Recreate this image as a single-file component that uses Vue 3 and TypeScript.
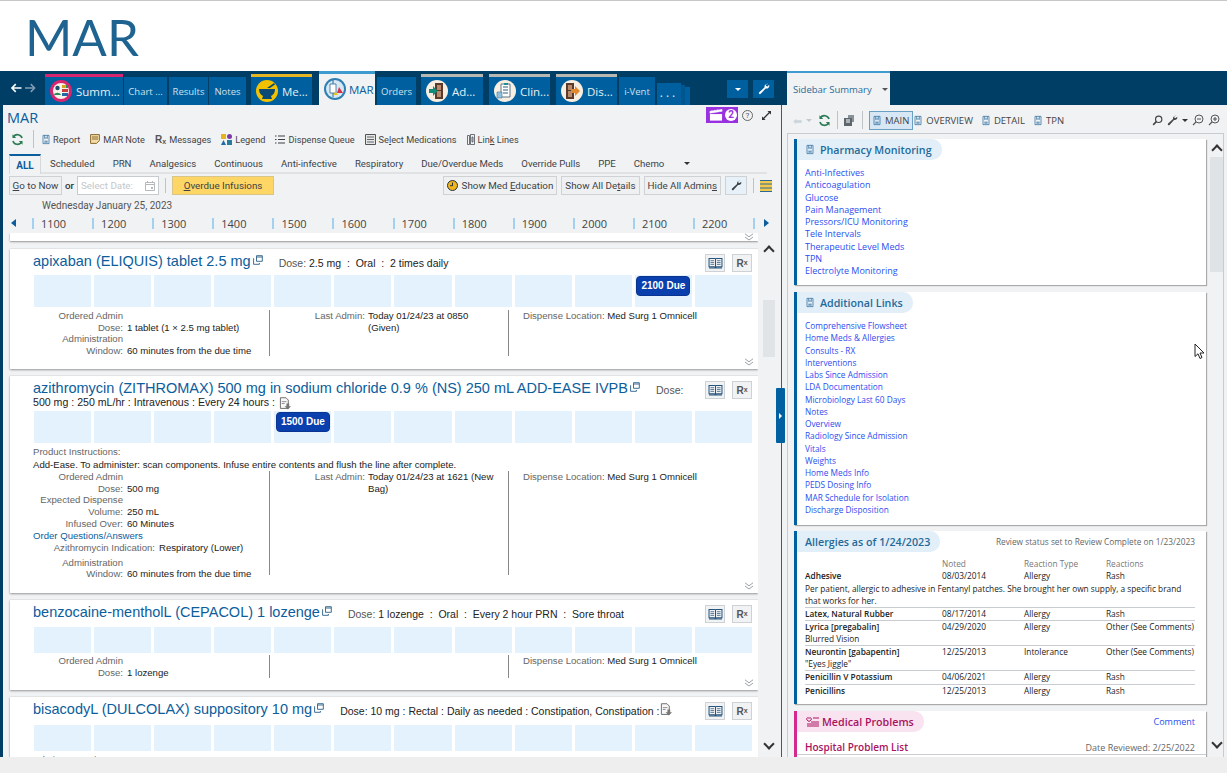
<script setup lang="ts">
interface Row { label?: string; value?: string; link?: string; wide?: boolean }
interface Med {
  name: string; dose?: string; after?: string; sub?: string; docIcon?: boolean
  headH: number; cellH: number; due?: number; dueLabel?: string; instr?: string; gap: number
  left: Row[]; lastAdmin?: string; divH: number; location: string; height: number; chevron: boolean; clip?: string
}

const tabs = [
  { label: "Summ...", w: 78, ml: 9, big: true, accent: "pink", icon: "summ" },
  { label: "Chart ...", w: 43, ml: 1 },
  { label: "Results", w: 39, ml: 2 },
  { label: "Notes", w: 37, ml: 1 },
  { label: "Me...", w: 61, ml: 5, big: true, accent: "yellow", icon: "med" },
  { label: "MAR", w: 56, ml: 7, big: true, active: true, icon: "mar" },
  { label: "Orders", w: 39, ml: 2 },
  { label: "Ad...", w: 62, ml: 5, big: true, accent: "grey", icon: "adm" },
  { label: "Clin...", w: 61, ml: 6, big: true, accent: "grey", icon: "clin" },
  { label: "Dis...", w: 61, ml: 6, big: true, accent: "grey", icon: "dis" },
  { label: "i-Vent", w: 36, ml: 2 },
]

const tools = [
  { label: "Report", icon: "doc" }, { label: "MAR Note", icon: "note" }, { label: "Messages", icon: "rx" },
  { label: "Legend", icon: "legend" }, { label: "Dispense Queue", icon: "list" },
  { label: "Select Medications", icon: "select" }, { label: "Link Lines", icon: "link" },
]
const filters = ["Scheduled", "PRN", "Analgesics", "Continuous", "Anti-infective", "Respiratory", "Due/Overdue Meds", "Override Pulls", "PPE", "Chemo"]
const hours = ["1100", "1200", "1300", "1400", "1500", "1600", "1700", "1800", "1900", "2000", "2100", "2200"]

const window60: Row = { label: "Administration Window:", value: "60 minutes from the due time" }
const meds: Med[] = [
  {
    name: "apixaban (ELIQUIS) tablet 2.5 mg", dose: "2.5 mg  :  Oral  :  2 times daily", headH: 26, cellH: 32, due: 10, dueLabel: "2100 Due", gap: 3,
    left: [{ label: "Ordered Admin Dose:", value: "1 tablet (1 × 2.5 mg tablet)" }, window60],
    lastAdmin: "Today 01/24/23 at 0850 (Given)", divH: 46, location: "Med Surg 1 Omnicell", height: 120, chevron: true,
  },
  {
    name: "azithromycin (ZITHROMAX) 500 mg in sodium chloride 0.9 % (NS) 250 mL ADD-EASE IVPB", after: "Dose:",
    sub: "500 mg : 250 mL/hr : Intravenous : Every 24 hours :", docIcon: true, headH: 35, cellH: 32, due: 4, dueLabel: "1500 Due", gap: 0,
    instr: "Add-Ease. To administer: scan components. Infuse entire contents and flush the line after complete.",
    left: [
      { label: "Ordered Admin Dose:", value: "500 mg" },
      { label: "Expected Dispense Volume:", value: "250 mL" },
      { label: "Infused Over:", value: "60 Minutes" },
      { link: "Order Questions/Answers" },
      { label: "Azithromycin Indication:", value: "Respiratory (Lower)", wide: true },
      window60,
    ],
    lastAdmin: "Today 01/24/23 at 1621 (New Bag)", divH: 104, location: "Med Surg 1 Omnicell", height: 217, chevron: true,
  },
  {
    name: "benzocaine-mentholL (CEPACOL) 1 lozenge", dose: "1 lozenge  :  Oral  :  Every 2 hour PRN  :  Sore throat", headH: 27, cellH: 26, gap: 2,
    left: [{ label: "Ordered Admin Dose:", value: "1 lozenge" }], divH: 23, location: "Med Surg 1 Omnicell", height: 90, chevron: true,
  },
  {
    name: "bisacodyL (DULCOLAX) suppository 10 mg", dose: "10 mg : Rectal : Daily as needed : Constipation, Constipation :", docIcon: true, headH: 28, cellH: 26, gap: 4,
    left: [], divH: 0, location: "", height: 70, chevron: false, clip: "Admin Instructions:",
  },
]

const pharmacy = ["Anti-Infectives", "Anticoagulation", "Glucose", "Pain Management", "Pressors/ICU Monitoring", "Tele Intervals", "Therapeutic Level Meds", "TPN", "Electrolyte Monitoring"]
const extra = ["Comprehensive Flowsheet", "Home Meds & Allergies", "Consults - RX", "Interventions", "Labs Since Admission", "LDA Documentation", "Microbiology Last 60 Days", "Notes", "Overview", "Radiology Since Admission", "Vitals", "Weights", "Home Meds Info", "PEDS Dosing Info", "MAR Schedule for Isolation", "Discharge Disposition"]
const allergies = [
  { name: "Adhesive", noted: "08/03/2014", type: "Allergy", reaction: "Rash", note: "Per patient, allergic to adhesive in Fentanyl patches. She brought her own supply, a specific brand that works for her." },
  { name: "Latex, Natural Rubber", noted: "08/17/2014", type: "Allergy", reaction: "Rash" },
  { name: "Lyrica [pregabalin]", noted: "04/29/2020", type: "Allergy", reaction: "Other (See Comments)", note: "Blurred Vision" },
  { name: "Neurontin [gabapentin]", noted: "12/25/2013", type: "Intolerance", reaction: "Other (See Comments)", note: "\"Eyes Jiggle\"" },
  { name: "Penicillin V Potassium", noted: "04/06/2021", type: "Allergy", reaction: "Rash" },
  { name: "Penicillins", noted: "12/25/2013", type: "Allergy", reaction: "Rash" },
]
</script>

<template>
  <svg class="defs" width="0" height="0">
    <symbol id="doc" viewBox="0 0 12 14"><path d="M1.500.8h9v12.400h-9zM3.500 9.500h5M3.500 11h5M4 1v4.500l2-1.200 2 1.200V1" fill="none" stroke="currentColor" stroke-width="1.100"/></symbol>
    <symbol id="wrench" viewBox="0 0 16 16"><path d="M13.600 1.200a3.800 3.800 0 0 0-4.800 4.600L1.600 12.400a1.400 1.400 0 0 0 2 2l6.600-7.200a3.800 3.800 0 0 0 4.700-4.800l-2.200 2.100-2-.5-.5-1.900z" fill="currentColor"/></symbol>
    <symbol id="refresh" viewBox="0 0 16 16"><path d="M13.600 6.200A6 6 0 0 0 3 4.600M2.400 9.800A6 6 0 0 0 13 11.400" fill="none" stroke="#2d7a55" stroke-width="2"/><path d="M1.800 1.600v4.600h4.600zM14.200 14.400V9.800H9.600z" fill="#2d7a55"/></symbol>
    <symbol id="ext" viewBox="0 0 10 10"><path d="M3.500.7h5.800v5.600H3.500zM3.500 2h5.800M1 3.500H.6v5.800h5.800V8" fill="none" stroke="#3f6f92" stroke-width="1"/></symbol>
    <symbol id="book" viewBox="0 0 16 13"><path d="M1 1.500h6c.5 0 1 .3 1 .7 0-.4.500-.7 1-.7h6v9H9.500c-.8 0-1.500.5-1.500.8 0-.3-.7-.8-1.500-.8H1zM8 2v9M1 12h14" fill="none" stroke="#26547c" stroke-width="1.100"/><path d="M2.500 4h4M2.500 6h4M2.500 8h4M9.500 4h4M9.500 6h4M9.500 8h4" stroke="#26547c" stroke-width=".8"/></symbol>
    <symbol id="docdown" viewBox="0 0 14 14"><path d="M1.500.8h6l2.500 2.500v9H1.500z" fill="#f8f8f8" stroke="#666"/><path d="M3 5h5M3 7h3" stroke="#888"/><path d="M8 7h3v3h2l-3.500 3.500L6 10h2z" fill="#777"/></symbol>
    <symbol id="magnify" viewBox="0 0 14 14"><circle cx="8.500" cy="5.500" r="4" fill="none" stroke="#444" stroke-width="1.500"/><path d="M5.500 8.500 1.500 12.500" stroke="#444" stroke-width="2"/></symbol>
    <symbol id="dchev" viewBox="0 0 10 8"><path d="m1 .8 4 3 4-3M1 4l4 3 4-3" fill="none" stroke="#9aa3a8"/></symbol>
  </svg>

  <div class="page">
    <header class="banner">
      <h1>MAR</h1>
    </header>

    <nav class="strip">
      <span class="hist">
        <svg width="12" height="10" viewBox="0 0 12 10"><path d="M12 5H2M6 1 2 5l4 4" fill="none" stroke="#fff" stroke-width="1.600"/></svg>
        <svg width="12" height="10" viewBox="0 0 12 10"><path d="M0 5h10M6 1l4 4-4 4" fill="none" stroke="#7f9db2" stroke-width="1.600"/></svg>
      </span>
      <div
        v-for="t in tabs" :key="t.label" class="tab"
        :class="[t.accent, { big: t.big, active: t.active }]"
        :style="{ width: t.w + 'px', marginLeft: t.ml + 'px' }"
      >
        <svg v-if="t.icon === 'summ'" class="tabicon" viewBox="0 0 22 22"><circle cx="11" cy="11" r="11" fill="#d8256f"/><circle cx="11" cy="11" r="8" fill="#f7f3ea"/><circle cx="7.500" cy="8" r="2.200" fill="#1d4f6e"/><path d="M4 15c.5-3 6-3 7 0z" fill="#2c8a57"/><path d="M12 5h3v3h-3z" fill="#d6a21e"/><path d="M15.500 5H18v3h-2.500z" fill="#2c8a57"/><path d="M12 9h6v3h-6z" fill="#c93d3d"/><path d="M12 13h6v3h-6z" fill="#1d6aa5"/></svg>
        <svg v-else-if="t.icon === 'med'" class="tabicon" viewBox="0 0 22 22"><circle cx="11" cy="11" r="11" fill="#f2c200"/><path d="M3 9h16c0 4-2 6-4 7l1 3H6l1-3c-2-1-4-3-4-7z" fill="#0a4a75"/><path d="M11 8 18 3l1 1.500L14 8z" fill="#0a4a75"/></svg>
        <svg v-else-if="t.icon === 'mar'" class="tabicon" viewBox="0 0 22 22"><circle cx="11" cy="11" r="11" fill="#2f7fb3"/><circle cx="11" cy="11" r="9" fill="#d6e8f4"/><path d="M6 6h6v9H6z" fill="#fff" stroke="#2f6a94" stroke-width=".8"/><path d="M9 2v4M9 15v4" stroke="#2f6a94"/><path d="m15 9 4 6h-6z" fill="#d8324a"/><path d="m11 13 3 4h-4z" fill="#f2c200"/></svg>
        <svg v-else-if="t.icon === 'adm'" class="tabicon" viewBox="0 0 22 22"><circle cx="11" cy="11" r="11" fill="#f8efe2"/><path d="M9 3h8v16H9z" fill="#5b3a2b"/><path d="M11 5h4v5h-4zM11 11h4v6h-4z" fill="#b88b6c"/><path d="M3 9h4V6l4.500 5L7 16v-3H3z" fill="#138c7a"/></svg>
        <svg v-else-if="t.icon === 'clin'" class="tabicon" viewBox="0 0 22 22"><circle cx="11" cy="11" r="11" fill="#f8efe2"/><path d="M7 4h9v13H7z" fill="#fff" stroke="#5a7689"/><path d="M9 7h5M9 10h5M9 13h5" stroke="#2a5d80"/><path d="M10 3h4v2h-4z" fill="#1d8d96"/><path d="M3 12h5v6H3z" fill="#8ec0e0" stroke="#4b7693" stroke-width=".6"/></svg>
        <svg v-else-if="t.icon === 'dis'" class="tabicon" viewBox="0 0 22 22"><circle cx="11" cy="11" r="11" fill="#f8efe2"/><path d="M5 3h8v16H5z" fill="#5b3a2b"/><path d="M7 5h4v5H7zM7 11h4v6H7z" fill="#b88b6c"/><path d="M10 9h4V6l5 5-5 5v-3h-4z" fill="#e08a2d"/></svg>
        <span>{{ t.label }}</span>
      </div>
      <div class="more">...</div>
      <button class="stripbtn first"><i class="caret white" /></button>
      <button class="stripbtn"><svg width="12" height="12"><use href="#wrench" /></svg></button>
      <div class="sidetab"><span>Sidebar Summary</span><i class="caret" /></div>
    </nav>

    <main class="body">
      <section class="left">
        <div class="titlerow">
          <h2>MAR</h2>
          <span class="badge">
            <svg width="14" height="12" viewBox="0 0 15 12"><path d="M1 5h13v7H1z" fill="#fff"/><path d="M1 4V2l13-2v2zM3 3V1M6 2.500V.5M9 2V0" fill="#fff" stroke="#fff" stroke-width=".6"/></svg>
            <b>2</b>
          </span>
          <span class="help">?</span>
          <svg class="expand" width="9" height="9" viewBox="0 0 10 10"><path d="M6 0h4v4L8.500 2.500 2.500 8.500 4 10H0V6l1.500 1.500 6-6z" fill="#333"/></svg>
        </div>

        <div class="toolbar">
          <svg class="refresh" width="13" height="13"><use href="#refresh" /></svg>
          <i class="vsep" />
          <span v-for="t in tools" :key="t.label" class="tool">
            <svg v-if="t.icon === 'doc'" width="8" height="11" class="blue"><use href="#doc" /></svg>
            <svg v-else-if="t.icon === 'note'" width="10" height="10" viewBox="0 0 10 10"><path d="M.6.6h8.800v6L6.500 9.400H.6z" fill="#f3dca6" stroke="#8a6a2c"/><path d="M2 3h6M2 5h6" stroke="#8a6a2c"/></svg>
            <span v-else-if="t.icon === 'rx'" class="rx small">R<sub>x</sub></span>
            <svg v-else-if="t.icon === 'legend'" width="11" height="11" viewBox="0 0 11 11"><path d="M0 0h5v5H0z" fill="#e8b21d"/><circle cx="8.500" cy="2.500" r="2.500" fill="#7d3aa8"/><path d="m2.500 6 2.500 5H0z" fill="#1f6ca8"/><path d="M6 6h5v5H6z" fill="#2a7d9a"/></svg>
            <svg v-else-if="t.icon === 'list'" width="10" height="9" viewBox="0 0 10 9"><path d="M0 1h1.500M3 1h7M0 4.500h1.500M3 4.500h7M0 8h1.500M3 8h7" stroke="#3a3f45" stroke-width="1.200"/></svg>
            <svg v-else-if="t.icon === 'select'" width="11" height="11" viewBox="0 0 11 11"><path d="M.5.5h10v10H.5z" fill="#e4e6e8" stroke="#555"/><path d="M2 3h7M2 5.500h7M2 8h7" stroke="#666"/></svg>
            <svg v-else width="8" height="11" viewBox="0 0 8 11"><path d="M.5 1.500h2v9h-2zM3.500.5h4v10h-4zM5 3h1v5H5z" fill="none" stroke="#4a5058" stroke-width=".8"/></svg>
            <span v-if="t.label === 'Select Medications'">Se<u>l</u>ect Medications</span>
            <span v-else-if="t.label === 'Link Lines'">Lin<u>k</u> Lines</span>
            <span v-else>{{ t.label }}</span>
          </span>
        </div>

        <div class="filters">
          <span class="ftab on">ALL</span>
          <span v-for="f in filters" :key="f" class="ftab">{{ f }}</span>
          <i class="caret dark" />
        </div>

        <div class="actions">
          <button class="btn"><span><u>G</u>o to Now</span></button>
          <span class="or">or</span>
          <span class="dateinput">Select Date:
            <svg width="10" height="10" viewBox="0 0 10 10"><path d="M.5 1.500h9v8h-9zM.5 3.500h9M2.500 0v2M7.500 0v2" fill="none" stroke="#b5b9bd"/><path d="M6 6h2v2H6z" fill="#b5b9bd"/></svg>
          </span>
          <i class="vsep short" />
          <button class="btn overdue"><span><u>O</u>verdue Infusions</span></button>
          <span class="spacer" />
          <button class="btn">
            <svg width="11" height="11" viewBox="0 0 11 11"><circle cx="5.500" cy="5.500" r="5" fill="#f0b41c" stroke="#26333d"/><path d="M5.500 2.500v3.200H3" fill="none" stroke="#26333d"/></svg>
            <span>Show Med <u>E</u>ducation</span>
          </button>
          <button class="btn"><span>Show All De<u>t</u>ails</span></button>
          <button class="btn"><span>Hide All Admin<u>s</u></span></button>
          <button class="btn wrenchbtn"><svg width="11" height="11"><use href="#wrench" /></svg></button>
          <i class="vsep short" />
          <svg class="bands" width="12" height="12" viewBox="0 0 12 12"><path d="M0 0h12v12H0z" fill="#f2c94c"/><path d="M0 .5h12M0 4h12M0 8h12M0 11.500h12" stroke="#2a6a97"/></svg>
        </div>

        <div class="datetext">Wednesday January 25, 2023</div>
        <div class="ruler">
          <i class="arrow l" />
          <span v-for="h in hours" :key="h" class="hour">{{ h }}</span>
          <i class="tick" />
          <i class="arrow r" />
        </div>

        <div class="listwrap">
          <div class="list">
            <div class="card stub"><svg class="chev" width="10" height="8"><use href="#dchev" /></svg></div>
            <article v-for="m in meds" :key="m.name" class="card" :style="{ height: m.height + 'px' }">
              <div class="head" :style="{ height: m.headH + 'px' }">
                <span class="medname">{{ m.name }}</span>
                <svg class="exticon" width="10" height="10"><use href="#ext" /></svg>
                <span v-if="m.after" class="dose"><em>{{ m.after }}</em></span>
                <span v-if="m.dose" class="dose" :class="{ plain: m.docIcon }"><em v-if="!m.docIcon">Dose: </em><template v-else>Dose: </template>{{ m.dose }}</span>
                <svg v-if="m.docIcon && m.dose" class="docdown" width="13" height="13"><use href="#docdown" /></svg>
                <div v-if="m.sub" class="subline">{{ m.sub }} <svg class="docdown" width="13" height="13"><use href="#docdown" /></svg></div>
              </div>
              <div class="actionbtns">
                <button><svg width="15" height="12"><use href="#book" /></svg></button>
                <button class="rx">R<sub>x</sub></button>
              </div>
              <div class="cells" :style="{ height: m.cellH + 'px' }">
                <div v-for="n in 12" :key="n" class="cell">
                  <span v-if="m.due === n - 1" class="due">{{ m.dueLabel }}</span>
                </div>
              </div>
              <div v-if="m.clip" class="clipnote">{{ m.clip }}</div>
              <div v-if="m.instr" class="instr">
                <div class="instrhead">Product Instructions:</div>
                <div>{{ m.instr }}</div>
              </div>
              <div v-if="m.left.length" class="details" :style="{ marginTop: m.gap + 'px', height: m.divH + 'px' }">
                <div class="dcol first">
                  <template v-for="r in m.left" :key="r.label || r.link">
                    <a v-if="r.link" class="orderlink">{{ r.link }}</a>
                    <div v-else class="drow" :class="{ spaced: r.wide }">
                      <span class="dlabel" :class="{ wide: r.wide }">{{ r.label }}</span>
                      <span class="dvalue">{{ r.value }}</span>
                    </div>
                  </template>
                </div>
                <div class="dcol mid">
                  <div v-if="m.lastAdmin" class="drow top">
                    <span class="dlabel mid">Last Admin:</span>
                    <span class="dvalue">{{ m.lastAdmin }}</span>
                  </div>
                </div>
                <div class="dcol last">
                  <span class="dlabel">Dispense Location: </span><span class="dvalue">{{ m.location }}</span>
                </div>
              </div>
              <svg v-if="m.chevron" class="chev" width="10" height="8"><use href="#dchev" /></svg>
            </article>
          </div>
          <div class="scroll lefts">
            <i class="up" />
            <i class="thumb" />
            <i class="down" />
          </div>
        </div>
      </section>

      <div class="gutter"><button class="handle"><i /></button></div>

      <aside class="right">
        <div class="rtools">
          <span class="backarrow">⬅</span>
          <i class="caret light" />
          <svg width="13" height="13" class="rrefresh"><use href="#refresh" /></svg>
          <i class="vsep" />
          <svg width="12" height="11" viewBox="0 0 12 11"><path d="M4 0h6v7H4z" fill="#8a9299"/><path d="M0 3h8v8H0z" fill="#5e666d"/><path d="M2 5h4M2 7h4" stroke="#fff"/></svg>
          <i class="vsep" />
          <span class="rbtn on"><svg width="8" height="11" class="blue"><use href="#doc" /></svg>MAIN</span>
          <span class="rbtn"><svg width="8" height="11" class="blue"><use href="#doc" /></svg>OVERVIEW</span>
          <span class="rbtn"><svg width="8" height="11" class="blue"><use href="#doc" /></svg>DETAIL</span>
          <span class="rbtn"><svg width="8" height="11" class="blue"><use href="#doc" /></svg>TPN</span>
          <span class="spacer" />
          <svg width="11" height="11"><use href="#magnify" /></svg>
          <svg width="11" height="11" class="dk"><use href="#wrench" /></svg>
          <i class="caret dark" />
          <svg width="12" height="12" viewBox="0 0 12 12"><circle cx="7" cy="5" r="4" fill="none" stroke="#555"/><path d="M5 5h4M4 8l-3 3" stroke="#555" stroke-width="1.100"/></svg>
          <svg width="12" height="12" viewBox="0 0 12 12"><circle cx="7" cy="5" r="4" fill="none" stroke="#555"/><path d="M5 5h4M7 3v4M4 8l-3 3" stroke="#555" stroke-width="1.100"/></svg>
        </div>

        <div class="rframe">
          <div class="rlist">
            <section class="rcard h146">
              <h3 class="pill"><svg width="8" height="11" class="blue"><use href="#doc" /></svg>Pharmacy Monitoring</h3>
              <div class="links"><a v-for="l in pharmacy" :key="l">{{ l }}</a></div>
            </section>
            <section class="rcard h233">
              <h3 class="pill"><svg width="8" height="11" class="blue"><use href="#doc" /></svg>Additional Links</h3>
              <div class="links narrow"><a v-for="l in extra" :key="l">{{ l }}</a></div>
            </section>
            <section class="rcard h173">
              <div class="cardtop">
                <h3 class="pill noicon">Allergies as of 1/24/2023</h3>
                <span class="review">Review status set to Review Complete on 1/23/2023</span>
              </div>
              <div class="allergies">
                <div class="arow ahead"><span /><span>Noted</span><span>Reaction Type</span><span>Reactions</span></div>
                <div v-for="a in allergies" :key="a.name" class="agroup">
                  <div class="arow"><b>{{ a.name }}</b><span>{{ a.noted }}</span><span>{{ a.type }}</span><span>{{ a.reaction }}</span></div>
                  <div v-if="a.note" class="anote">{{ a.note }}</div>
                </div>
              </div>
            </section>
            <section class="rcard pink">
              <div class="cardtop">
                <h3 class="pill rose">
                  <svg width="13" height="11" viewBox="0 0 13 11"><path d="M3 5.500 1 4c-1-1 0-2.500 1.200-2.200L3 2.400l.8-.6C5 1.500 6 3 5 4z" fill="none" stroke="#a8125f"/><path d="M7 2h6M5 6h8M1 8h12M1 10h12" stroke="#a8125f"/></svg>
                  Medical Problems
                </h3>
                <a class="comment">Comment</a>
              </div>
              <div class="hospital"><b>Hospital Problem List</b><span>Date Reviewed: 2/25/2022</span></div>
              <div class="clipcols"><span>ICD-10-CM</span><span>Priority</span><span>Class</span><span>Noted</span><span>POA</span></div>
            </section>
          </div>
          <div class="scroll rights">
            <i class="up" />
            <i class="thumb" />
            <i class="down" />
          </div>
        </div>
      </aside>
    </main>

    <footer class="foot" />
    <svg class="cursor" width="11" height="17" viewBox="0 0 11 17"><path d="M1 1v12.500l3-2.700 2 4.700 2-1-2-4.500h4z" fill="#fff" stroke="#222"/></svg>
  </div>
</template>

<style>
html, body { margin: 0; background: #fff; }
</style>

<style scoped>
.defs { position: absolute; }
.page {
  position: relative;
  width: 1227px;
  height: 773px;
  overflow: hidden;
  display: flex;
  flex-direction: column;
  font-family: "Open Sans", "Noto Sans", sans-serif;
  color: #333;
}
button { font-family: inherit; padding: 0; }
.banner { height: 70px; border-top: 1px solid #c8c8c8; flex: none; padding-left: 25px; }
h1 {
  margin: 0;
  font: 400 51px/71px Lato, sans-serif;
  color: #1f6391;
}

.strip { flex: none; height: 34px; background: #003e66; display: flex; align-items: flex-end; overflow: hidden; }
.hist { width: 36px; height: 34px; flex: none; box-sizing: border-box; padding-left: 10px; display: flex; align-items: center; gap: 3px; }
.tab {
  flex: none;
  height: 28px;
  background: #005f9e;
  color: #cfe0ec;
  font-size: 9.5px;
  display: flex;
  align-items: center;
  justify-content: center;
  box-sizing: border-box;
}
.tab.big { height: 31px; border-top: 3px solid; font-size: 11.5px; justify-content: flex-start; padding-left: 5px; gap: 4px; color: #e6eff5; }
.tab.pink { border-color: #d8256f; }
.tab.yellow { border-color: #e6b722; }
.tab.grey { border-color: #b8b8b0; }
.tab.active { height: 34px; background: #f0f2f4; border-color: #3d9bd0; color: #0c5d9c; gap: 3px; }
.tabicon { width: 22px; height: 22px; flex: none; }
.tab.active .tabicon { margin-top: -1px; }
.more {
  flex: none;
  width: 24px;
  height: 22px;
  margin-left: 2px;
  background: #005f9e;
  color: #e6eff5;
  font-size: 12px;
  letter-spacing: 3px;
  text-align: center;
  line-height: 20px;
  box-shadow: 4px 2px 0 #00568f, 9px 4px 0 #005f9e;
}
.stripbtn {
  flex: none;
  width: 21px;
  height: 18px;
  border: 0;
  margin: 0 0 7px 5px;
  background: #005f9e;
  color: #fff;
  display: flex;
  align-items: center;
  justify-content: center;
}
.stripbtn.first { margin-left: 46px; }
.sidetab {
  flex: none;
  width: 103px;
  height: 34px;
  margin-left: 13px;
  box-sizing: border-box;
  border-top: 2px solid #3d9bd0;
  background: #f0f2f4;
  color: #2a6a97;
  font-size: 9.5px;
  display: flex;
  align-items: center;
  gap: 10px;
  padding-left: 6px;
  white-space: nowrap;
}
.caret { display: inline-block; width: 0; height: 0; border: 3px solid transparent; border-top: 3px solid #555; border-bottom: 0; flex: none; }
.caret.white { border-top-color: #fff; }
.caret.dark { border-top-color: #333; }
.caret.light { border-top-color: #c4c9ce; }

.body { flex: none; height: 652px; display: flex; background: #f0f2f4; }
.left { width: 778px; margin-left: 3px; flex: none; display: flex; flex-direction: column; box-shadow: -3px 0 0 #003e66; font-family: Roboto, sans-serif; }
.titlerow { height: 24px; flex: none; display: flex; align-items: center; padding: 0 10px 0 4px; }
h2 { margin: 0 auto 0 0; font: 500 14.5px "Open Sans", sans-serif; color: #0c5d9c; }
.badge { width: 32px; height: 16px; background: #9a31e0; color: #fff; display: flex; align-items: center; gap: 2px; box-sizing: border-box; padding-left: 3px; margin-top: -4px; }
.badge b { width: 12px; height: 12px; border-radius: 50%; background: #fff; color: #9a31e0; font-size: 10px; line-height: 12px; text-align: center; }
.help { width: 9px; height: 9px; margin: -4px 0 0 4px; border: 1px solid #666; border-radius: 50%; font-size: 8px; line-height: 9px; text-align: center; color: #555; box-sizing: content-box; }
.expand { margin: -4px 0 0 9px; }
.toolbar { height: 20px; flex: none; display: flex; align-items: center; padding-left: 8px; font-size: 9.2px; color: #444; }
.toolbar .vsep { margin: 0 8px 0 9px; }
.tool { display: flex; align-items: center; gap: 3px; margin-right: 10px; white-space: pre; }
.refresh { flex: none; }
.blue { color: #2a6a9b; flex: none; }
.vsep { width: 1px; height: 18px; background: #bfc3c7; flex: none; display: block; }
.vsep.short { height: 15px; margin: 0 7px; }
.rx { font: 700 10px "Liberation Sans", sans-serif; color: #555; }
.rx sub { font-size: 7px; vertical-align: -1px; line-height: 0; }
.rx.small { font-size: 10px; }
.filters { height: 25px; flex: none; display: flex; align-items: center; margin-left: 6px; margin-right: 14px; border-bottom: 2px solid #e0e2e4; font-size: 9.6px; color: #3c4248; box-sizing: border-box; padding-top: 5px; }
.ftab { margin-left: 18px; white-space: nowrap; }
.ftab.on { margin-left: 0; width: 32px; height: 20px; text-align: center; box-sizing: border-box; border: 1px solid #d6d8da; border-top: 2px solid #0c5d9c; border-bottom: 0; background: #f0f2f4; font-size: 10px; font-weight: 700; color: #0c5d9c; margin-bottom: -2px; line-height: 19px; margin-right: -9px; }
.filters .caret { margin-left: 20px; }
.actions { height: 19px; flex: none; display: flex; align-items: center; margin-left: 6px; margin-top: 2px; padding-right: 9px; font-size: 9.8px; }
.btn { height: 19px; padding: 0 3px; border: 1px solid #cfd2d5; background: #eef0f2; color: #3c4248; font-size: 9.8px; display: flex; align-items: center; gap: 4px; white-space: nowrap; box-sizing: border-box; margin-left: 4px; }
.btn:first-child { margin-left: 0; width: 53px; justify-content: center; }
.btn.overdue { width: 102px; justify-content: center; background: #fdd666; border-color: #d9c48a; margin-left: 0; }
.or { margin: 0 3px; font-weight: 500; }
.dateinput { width: 82px; height: 19px; box-sizing: border-box; border: 1px solid #c8cbce; background: #fff; color: #c4c7ca; display: flex; align-items: center; justify-content: space-between; padding: 0 3px; }
.spacer { flex: 1; }
.wrenchbtn { width: 22px; justify-content: center; background: #e6f1fa; }
.actions .vsep { margin: 0 6px; }
.actions .spacer + .btn { margin-left: 0; }
.bands { flex: none; }
.datetext { height: 15px; flex: none; margin-top: 3px; padding-left: 39px; font-size: 10px; line-height: 15px; color: #555; }
.ruler { height: 20px; flex: none; display: flex; align-items: center; padding-left: 29px; position: relative; font: 11px "Open Sans", sans-serif; color: #444; }
.hour { width: 60.1px; flex: none; box-sizing: border-box; padding-left: 7px; border-left: 2px solid #a4d0ef; line-height: 11px; height: 11px; display: flex; align-items: center; }
.tick { width: 2px; height: 11px; background: #a4d0ef; }
.arrow { position: absolute; width: 0; height: 0; border: 4px solid transparent; }
.arrow.l { left: 8px; border-left: 0; border-right: 5px solid #0c5d9c; }
.arrow.r { left: 761px; border-right: 0; border-left: 5px solid #0c5d9c; }

.listwrap { flex: 1; min-height: 0; display: flex; overflow: hidden; }
.list { width: 755px; flex: none; overflow: hidden; padding-left: 7px; box-sizing: border-box; }
.card {
  position: relative;
  box-sizing: border-box;
  background: #fff;
  margin-bottom: 7px;
  padding: 0 6px 0 24px;
  box-shadow: 0 1px 2px #999, 0 0 1px #bbb;
  width: 748px;
  overflow: hidden;
}
.card.stub { height: 8px; margin-bottom: 8px; }
.chev { position: absolute; right: 4px; bottom: 3px; }
.card.stub .chev { bottom: 0; }
.head { padding-top: 4px; box-sizing: border-box; margin-left: -1px; line-height: 15px; white-space: normal; width: 665px; overflow: visible; }
.medname { font: 14.5px/16px "Liberation Sans", sans-serif; color: #0c5d9c; }
.exticon { margin: 0 0 4px 2px; vertical-align: middle; }
.dose { font: 10.5px/15px "Liberation Sans", sans-serif; color: #222; margin-left: 16px; white-space: pre; position: relative; top: 1px; }
.dose em { font-style: normal; color: #555; }
.subline { font: 10.6px/14px "Liberation Sans", sans-serif; color: #222; margin-top: -2px; }
.docdown { vertical-align: middle; margin-left: 1px; }
.actionbtns { position: absolute; top: 5px; right: 6px; display: flex; gap: 7px; }
.actionbtns button { width: 20px; height: 18px; border: 1px solid #cfd2d5; background: #f0f2f4; display: flex; align-items: center; justify-content: center; }
.cells { display: grid; grid-template-columns: repeat(12, 1fr); gap: 3px; }
.cell { background: #e3f2fc; padding: 1px 1px 0; display: flex; justify-content: center; align-items: flex-start; }
.due { width: 54px; height: 20px; border-radius: 4px; background: #0a3fae; border: 1px solid #0a348f; box-sizing: border-box; color: #fff; font: 700 10px/18px "Liberation Sans", sans-serif; text-align: center; }
.clipnote { font: 9.6px/12px "Liberation Sans", sans-serif; color: #555; margin: 3px 0 0 -1px; }
.instr { font: 9.6px/13px "Liberation Sans", sans-serif; color: #222; margin: 2px 0 0 -1px; }
.instrhead { color: #666; }
.details { display: flex; font: 9.6px/11.7px "Liberation Sans", sans-serif; color: #222; }
.dcol { box-sizing: border-box; height: 100%; }
.dcol.first { width: 236px; border-right: 1px solid #888; }
.dcol.mid { width: 239px; border-right: 1px solid #888; }
.dcol.last { padding-left: 14px; }
.drow { display: flex; align-items: flex-end; }
.drow.top { align-items: flex-start; }
.drow.spaced { margin-bottom: 3px; }
.dlabel { color: #666; }
.drow .dlabel { width: 89px; text-align: right; flex: none; margin-right: 4px; }
.drow .dlabel.wide { width: 121px; white-space: nowrap; }
.drow .dlabel.mid { width: 95px; margin-right: 3px; }
.dvalue { color: #222; }
.dcol.mid .dvalue { width: 130px; }
.orderlink { display: block; color: #0c5d9c; margin-left: -1px; line-height: 12.500px; }

.scroll { flex: none; position: relative; }
.scroll i { display: block; position: absolute; }
.lefts { width: 16px; margin-left: 5px; }
.lefts .thumb { left: 0; top: 67px; width: 12px; height: 57px; background: #e1e4e7; }
.up, .down { width: 6px; height: 6px; left: 2px; border: solid #333; border-width: 2px 0 0 2px; }
.up { transform: rotate(45deg); }
.down { transform: rotate(225deg); }
.lefts .up { top: 14px; }
.lefts .down { top: 507px; }

.gutter { width: 3px; flex: none; position: relative; background: #f0f2f4; border-left: 1px solid #0c6aa8; box-sizing: border-box; }
.handle { position: absolute; left: -6px; top: 283px; width: 9px; height: 55px; background: #0060a0; border: 0; border-radius: 1px; display: flex; align-items: center; justify-content: center; z-index: 2; }
.handle i { border: 3px solid transparent; border-left: 3px solid #fff; border-right: 0; }

.right { flex: 1; min-width: 0; display: flex; flex-direction: column; }
.rtools { height: 30px; flex: none; display: flex; align-items: center; padding: 0 7px 0 9px; font-size: 9.5px; color: #444; gap: 4px; box-sizing: border-box; }
.backarrow { color: #cdd5da; font-size: 11px; }
.rrefresh { margin-left: 2px; }
.rtools .vsep { margin: 0 2px; }
.rbtn { display: flex; align-items: center; gap: 4px; padding: 0 3px; height: 17px; border: 1px solid transparent; margin-left: -3px; white-space: nowrap; }
.rbtn.on { background: #d7e8f4; border-color: #6a9fc4; margin-left: 0; margin-right: -4px; }
.dk { color: #444; }
.rframe { flex: 1; min-height: 0; display: flex; border: 1px solid #c8ccd0; border-bottom: 0; margin: -2px 3px 0 3px; padding: 5px 0 0 6px; overflow: hidden; background: #f0f2f4; }
.rlist { width: 412px; flex: none; display: flex; flex-direction: column; gap: 7px; }
.rcard { flex: none; background: #fff; border-left: 3px solid #0060a0; box-shadow: 1px 1px 1px #aaa; box-sizing: border-box; }
.rcard.h146 { height: 146px; }
.rcard.h233 { height: 233px; }
.rcard.h173 { height: 173px; margin-top: -1px; }
.rcard.pink { border-left-color: #d42a8f; height: 60px; overflow: hidden; }
.pill { display: flex; width: fit-content; align-items: center; gap: 6px; margin: 0; height: 21px; padding: 0 10px 0 9px; background: #e3eff8; border-radius: 0 10px 10px 0; font-size: 10.7px; font-weight: 600; color: #1f6a9a; box-sizing: border-box; white-space: nowrap; }
.pill.noicon { padding-left: 8px; }
.pill.rose { background: #fae3f1; color: #a8125f; gap: 3px; }
.links { display: flex; flex-direction: column; padding: 7px 0 0 8px; font-size: 9px; line-height: 12.27px; color: #2b4ef0; }
.links.narrow { font-size: 8.3px; }
.cardtop { display: flex; align-items: center; justify-content: space-between; padding-right: 11px; }
.review { font-size: 8.3px; color: #666; }
.comment { font-size: 9px; color: #2b4ef0; }
.allergies { padding: 6px 11px 0 8px; font-size: 8.3px; color: #222; line-height: 12.3px; }
.arow { display: grid; grid-template-columns: 137px 82px 82px 1fr; white-space: nowrap; }
.arow b { font-weight: 600; }
.ahead { color: #777; }
.agroup { border-bottom: 1px solid #c9cdd1; }
.agroup:last-child { border-bottom: 0; }
.anote { line-height: 12px; }
.hospital { display: flex; justify-content: space-between; align-items: baseline; padding: 8px 11px 0 8px; font-size: 9px; color: #666; border-bottom: 1px solid #c9cdd1; }
.hospital b { font-size: 10px; font-weight: 600; color: #a8125f; }
.clipcols { display: flex; gap: 8px; padding-left: 153px; font-size: 8.3px; color: #777; }
.rights { width: 14px; margin-left: 4px; }
.rights .thumb { left: 0; top: 18px; width: 13px; height: 115px; background: #dfe3e6; }
.rights .up { top: 7px; left: 3px; }
.rights .down { top: 600px; left: 3px; }
.foot { flex: 1; background: #eeeeee; }
.cursor { position: absolute; left: 1194px; top: 343px; }
</style>
